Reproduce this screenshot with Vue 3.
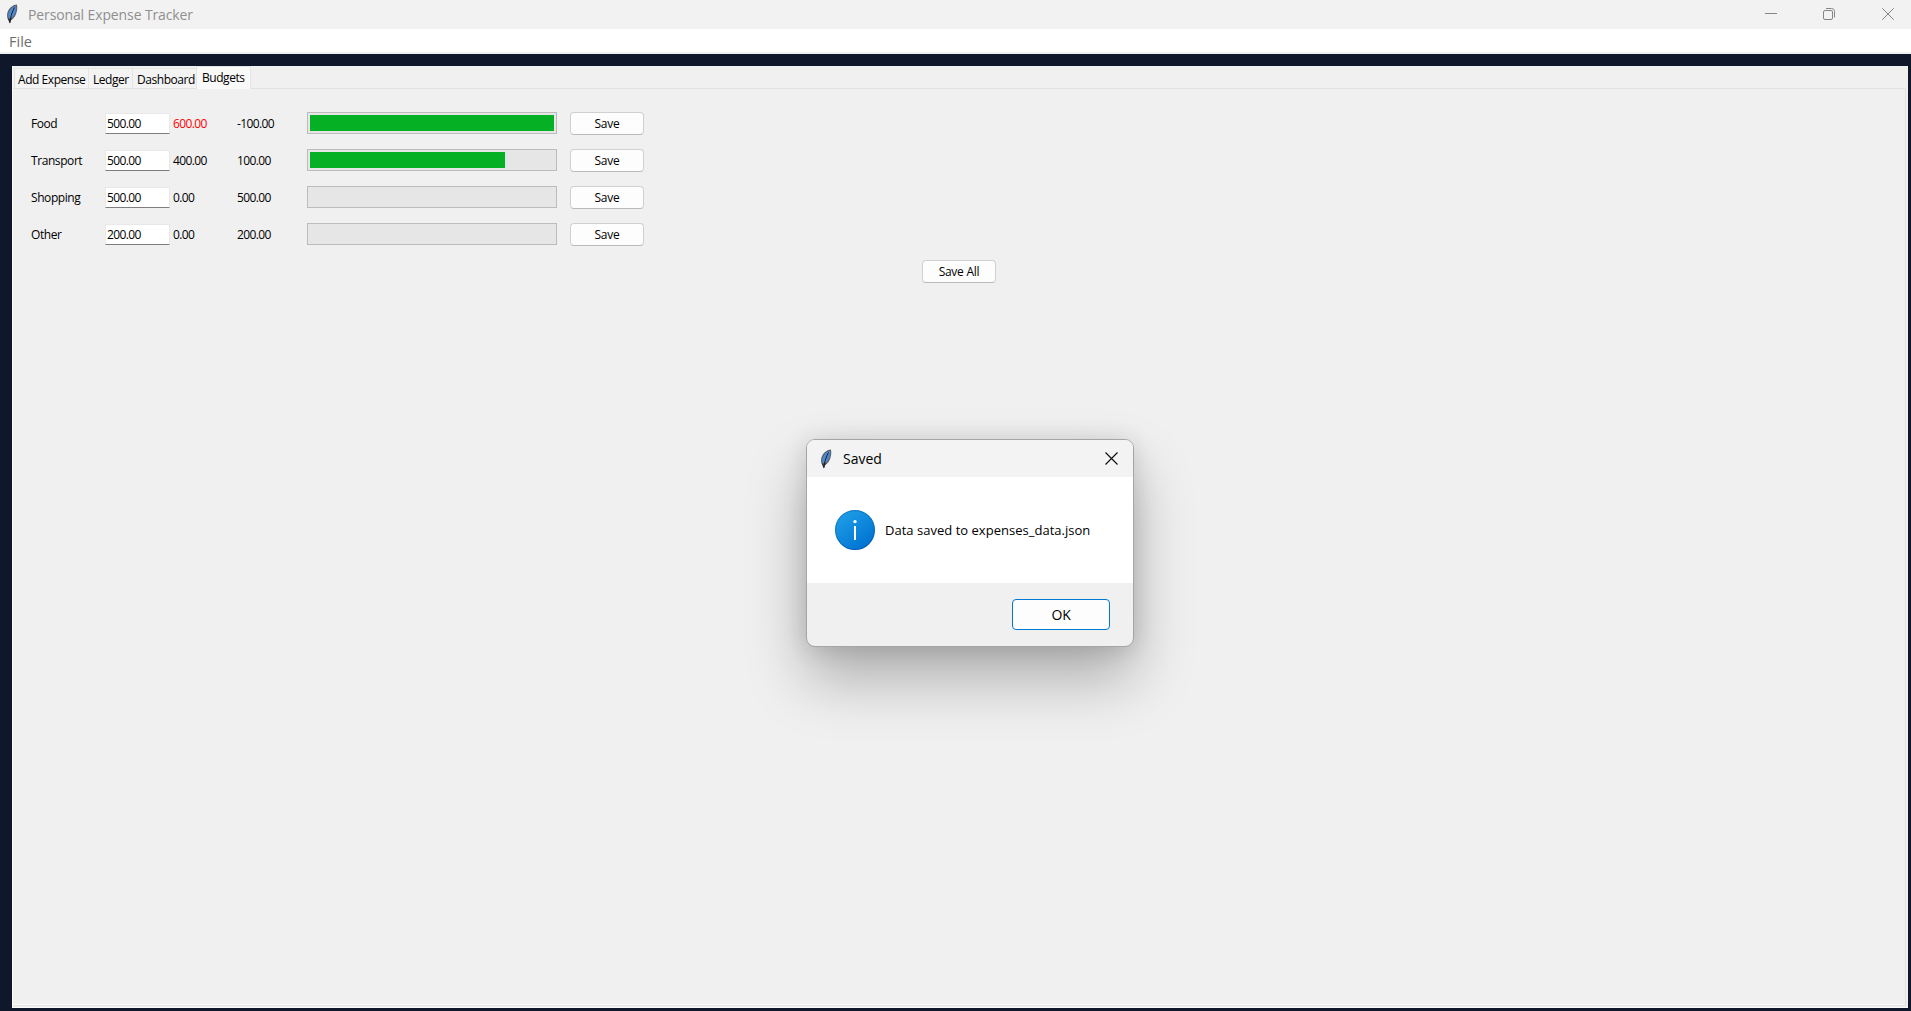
<script setup>
const tabs = [
  { label: 'Add Expense', cls: 't1' },
  { label: 'Ledger', cls: 't2' },
  { label: 'Dashboard', cls: 't3' },
  { label: 'Budgets', cls: 't4 active' }
]
const rows = [
  { name: 'Food', budget: '500.00', spent: '600.00', left: '-100.00', pct: 100, over: true },
  { name: 'Transport', budget: '500.00', spent: '400.00', left: '100.00', pct: 80 },
  { name: 'Shopping', budget: '500.00', spent: '0.00', left: '500.00', pct: 0 },
  { name: 'Other', budget: '200.00', spent: '0.00', left: '200.00', pct: 0 }
]
</script>

<template>
  <div class="window">
    <header class="titlebar">
      <svg class="feather" width="12" height="20" viewBox="0 0 12 20">
        <path d="M10.800.5C6.500.8 2.300 4.500 1.200 9.500c-.4 2.300-.1 4.300.9 6L3.700 19.500l1-3C8 14.800 10 11 10.800 7.500c.6-2.600.7-5 0-7Z" fill="#5a626c" />
        <path d="M9.900 1.800C6.500 3 3.300 6 2.400 10c-.3 1.600 0 3 .6 4.200L6 13.500C8 12 9.300 9 9.900 6c.4-1.600.4-3 0-4.200Z" fill="#4f8bd2" />
        <path d="M8.500 3.500C6.800 7 4.500 11.500 3.900 19M2.300 14.500l1.500 3 1.500-3" stroke="#171c24" stroke-width="1" fill="none" />
      </svg>
      <span class="title">Personal Expense Tracker</span>
      <div class="controls">
        <svg class="min" width="12" height="12" viewBox="0 0 12 12"><path d="M0 5.500h12" /></svg>
        <svg width="12" height="12" viewBox="0 0 12 12"><rect x=".5" y="2.500" width="9" height="9" rx="1.500" /><path d="M3 .5h5.500a3 3 0 0 1 3 3V9.500" /></svg>
        <svg width="12" height="12" viewBox="0 0 12 12"><path d="M.3.3l11.400 11.400M11.700.3L.3 11.700" /></svg>
      </div>
    </header>
    <nav class="menubar"><span>File</span></nav>
    <main class="body">
      <section class="notebook">
        <div class="tabs">
          <div v-for="t in tabs" :key="t.label" class="tab" :class="t.cls"><span>{{ t.label }}</span></div>
        </div>
        <div class="pane">
          <div v-for="r in rows" :key="r.name" class="row">
            <span class="name">{{ r.name }}</span>
            <span class="entry num">{{ r.budget }}</span>
            <span class="spent num" :class="{ over: r.over }">{{ r.spent }}</span>
            <span class="left num">{{ r.left }}</span>
            <div class="bar"><div class="fill" :style="{ width: r.pct + '%' }"></div></div>
            <button class="btn">Save</button>
          </div>
          <div class="all"><button class="btn">Save All</button></div>
        </div>
      </section>
    </main>

    <div class="dialog">
      <div class="dhead">
        <svg class="feather" width="12" height="20" viewBox="0 0 12 20">
          <path d="M10.800.5C6.500.8 2.300 4.500 1.200 9.500c-.4 2.300-.1 4.300.9 6L3.700 19.500l1-3C8 14.800 10 11 10.800 7.500c.6-2.600.7-5 0-7Z" fill="#5a626c" />
          <path d="M9.900 1.800C6.500 3 3.300 6 2.400 10c-.3 1.600 0 3 .6 4.200L6 13.500C8 12 9.300 9 9.900 6c.4-1.600.4-3 0-4.200Z" fill="#4f8bd2" />
          <path d="M8.500 3.500C6.800 7 4.500 11.500 3.900 19M2.300 14.500l1.500 3 1.500-3" stroke="#171c24" stroke-width="1" fill="none" />
        </svg>
        <span class="dtitle">Saved</span>
        <svg class="dclose" width="13" height="13" viewBox="0 0 13 13"><path d="M.5.5l12 12M12.500.5l-12 12" stroke="#111" stroke-width="1.200" /></svg>
      </div>
      <div class="dbody">
        <svg width="40" height="40" viewBox="0 0 40 40">
          <defs>
            <linearGradient id="disc" x1=".15" y1=".1" x2=".8" y2=".95"><stop offset="0" stop-color="#1e9de6" /><stop offset="1" stop-color="#0072d2" /></linearGradient>
            <linearGradient id="rim" x1="0" y1="0" x2=".6" y2="1"><stop offset="0" stop-color="#1789cf" /><stop offset="1" stop-color="#0060b8" /></linearGradient>
          </defs>
          <circle cx="20" cy="20" r="19.400" fill="url(#disc)" stroke="url(#rim)" stroke-width="1.200" />
          <circle cx="20" cy="11.600" r="1.700" fill="#fff" />
          <rect x="19" y="16" width="2" height="14" fill="#fff" />
        </svg>
        <span class="msg">Data saved to expenses_data.json</span>
      </div>
      <div class="dfoot"><button class="ok">OK</button></div>
    </div>
  </div>
</template>

<style>
body { margin: 0; overflow: hidden; }
</style>

<style scoped>
.window {
  position: relative;
  width: 1911px; height: 1011px;
  display: flex; flex-direction: column;
  background: #0f172a;
  color: #000;
  font: 12px "Open Sans", "Noto Sans", sans-serif;
  white-space: nowrap;
  overflow: hidden;
}
* { box-sizing: border-box; }
svg { display: block; flex: none; }
button { font: inherit; color: inherit; padding: 0; letter-spacing: inherit; }
.titlebar { height: 29px; flex: none; background: #f2f2f2; display: flex; align-items: center; padding: 0 17px 0 6px; }
.titlebar .feather { margin-top: -2px; }
.title { margin-left: 10px; font-size: 14px; letter-spacing: -.12px; color: #8f8f8f; }
.controls { margin-left: auto; display: flex; gap: 47px; margin-top: -1px; }
.controls svg { fill: none; stroke: #858585; stroke-width: 1; }
.controls .min { margin-right: -1px; }
.menubar { height: 25px; flex: none; background: #fff; border-bottom: 2px solid #f0f0f0; padding-left: 9px; font-size: 14.500px; line-height: 25px; color: #6e6e6e; letter-spacing: 0; }
.body { flex: 1; padding: 12px 3px 3px 12px; display: flex; }
.notebook { flex: 1; background: #f0f0f0; display: flex; flex-direction: column; border-left: 1px solid #fafafa; border-bottom: 1px solid #fafafa; }
.tabs { height: 22px; display: flex; align-items: flex-end; padding-left: 1px; }
.tab { height: 20px; background: #f3f3f3; border: 1px solid #e5e5e5; border-bottom: 0; border-right: 0; padding-left: 3px; line-height: 22px; font-size: 12px; letter-spacing: -.45px; }
.t1 { width: 74px; } .t2 { width: 44px; padding-left: 4px; } .t3 { width: 64px; padding-left: 4px; }
.t4 { width: 55px; }
.active { height: 23px; margin-bottom: -1px; background: #f9f9f9; padding-left: 5px; border-right: 1px solid #e5e5e5; position: relative; }
.pane { flex: 1; border: 1px solid #e2e2e2; border-left: 0; margin-right: 2px; margin-bottom: 1px; box-shadow: inset 0 -1px #fafafa; padding-top: 16px; }
.row { height: 37px; display: flex; align-items: center; padding-left: 18px; font-size: 12px; letter-spacing: -.42px; }
.name { width: 74px; }
.num { font-size: 12px; letter-spacing: -.6px; }
.entry { width: 65px; height: 21px; margin-top: -1px; background: #fff; border: 1px solid #e8e8e8; border-bottom: 1px solid #7e7e7e; border-radius: 1px; padding-left: 1px; line-height: 20px; }
.spent { width: 64px; padding-left: 3px; }
.left { width: 73px; padding-left: 3px; }
.over { color: #f00; }
.bar { width: 250px; height: 22px; margin: -2px 13px 0 0; border: 1px solid #bcbcbc; background: #e6e6e6; padding: 2px; }
.fill { height: 16px; background: #06b025; }
.btn { width: 74px; height: 23px; border: 1px solid #d0d0d0; border-bottom-color: #bababa; border-radius: 4px; background: #fdfdfd; font-size: 12px; line-height: 21px; letter-spacing: -.25px; }
.all { height: 37px; display: flex; align-items: center; justify-content: center; }
.dialog {
  position: absolute; left: 806px; top: 439px; width: 328px; height: 208px;
  border: 1px solid #a5a5a5; border-radius: 9px; overflow: hidden; background: #f0f0f0;
  display: flex; flex-direction: column;
  box-shadow: 0 32px 60px rgba(0,0,0,.28), 0 2px 24px rgba(0,0,0,.13);
}
.dhead { height: 37px; flex: none; display: flex; align-items: center; background: #f3f3f3; padding: 0 15px 0 13px; }
.dtitle { margin-left: 11px; font-size: 14px; letter-spacing: 0; }
.dclose { margin-left: auto; }
.dbody { height: 106px; flex: none; background: #fff; display: flex; align-items: center; padding-left: 28px; }
.msg { margin-left: 10px; font-size: 13px; letter-spacing: .02px; }
.dfoot { flex: 1; display: flex; justify-content: flex-end; padding: 16px 23px 0 0; }
.ok { width: 98px; height: 31px; border: 1px solid #0078d4; border-radius: 4px; background: #fdfdfd; font-size: 14px; letter-spacing: -.3px; }
</style>
